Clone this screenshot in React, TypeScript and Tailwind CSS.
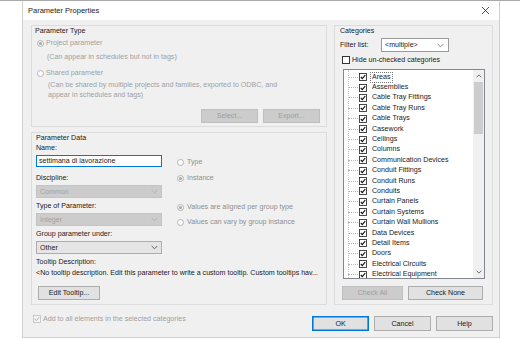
import React from "react";

const cats = [
  "Areas",
  "Assemblies",
  "Cable Tray Fittings",
  "Cable Tray Runs",
  "Cable Trays",
  "Casework",
  "Ceilings",
  "Columns",
  "Communication Devices",
  "Conduit Fittings",
  "Conduit Runs",
  "Conduits",
  "Curtain Panels",
  "Curtain Systems",
  "Curtain Wall Mullions",
  "Data Devices",
  "Detail Items",
  "Doors",
  "Electrical Circuits",
  "Electrical Equipment",
];

function Chevron({ color = "#444" }: { color?: string }) {
  return (
    <svg width="7" height="5" viewBox="0 0 7 5">
      <path d="M0.7 1 L3.5 3.8 L6.3 1" fill="none" stroke={color} strokeWidth="0.9" />
    </svg>
  );
}

function Radio({ checked, white }: { checked?: boolean; white?: boolean }) {
  return (
    <span
      className={
        "w-[7px] h-[7px] rounded-full border border-[#b5b5b5] flex items-center justify-center shrink-0 " +
        (white ? "bg-white" : "bg-[#f4f4f4]")
      }
    >
      {checked && <span className="w-[3px] h-[3px] rounded-full bg-[#a8a8a8]" />}
    </span>
  );
}

function TreeCheck() {
  return (
    <svg width="8" height="8" viewBox="0 0 8 8" className="shrink-0">
      <rect x="0.5" y="0.5" width="7" height="7" fill="#fff" stroke="#333" strokeWidth="0.9" />
      <path d="M1.8 4 L3.3 5.6 L6.2 2.2" fill="none" stroke="#111" strokeWidth="1.1" />
    </svg>
  );
}

function Btn({
  children,
  w,
  disabled,
  primary,
}: {
  children: React.ReactNode;
  w: string;
  disabled?: boolean;
  primary?: boolean;
}) {
  const base = "h-[14px] flex items-center justify-center shrink-0 border ";
  const look = disabled
    ? "bg-[#cccccc] border-[#bfbfbf] text-[#9d9d9d]"
    : primary
    ? "bg-[#e1e1e1] border-[#0078d7] shadow-[inset_0_0_0_0.6px_#0078d7] text-[#1a1a1a]"
    : "bg-[#e1e1e1] border-[#adadad] text-[#1a1a1a]";
  return <div className={base + look + " " + w}>{children}</div>;
}

export default function App() {
  return (
    <div
      className="w-[520px] h-[339px] bg-white border-t border-[#a9a9a9] overflow-hidden text-[7.1px] leading-[10px] text-[#1a1a1a]"
      style={{ fontFamily: '"Liberation Sans", Arial, sans-serif' }}
    >
      <div className="ml-[22px] w-[478px] h-[337px] border-l border-r border-b border-[#cfcfcf] flex flex-col">
        {/* title bar */}
        <div className="h-[19px] bg-white flex items-center justify-between pl-[5px] pr-[8px] shrink-0">
          <span className="text-[7.5px]">Parameter Properties</span>
          <svg width="9" height="9" viewBox="0 0 9 9" className="mr-[1px]">
            <path d="M1 1 L8 8 M8 1 L1 8" stroke="#222" strokeWidth="0.8" />
          </svg>
        </div>

        {/* body */}
        <div className="flex-1 bg-[#f0f0f0] pl-[8px] pr-[6px] pt-[5px] flex flex-col">
          <div className="flex gap-[7px]">
            {/* left column */}
            <div className="w-[296px] flex flex-col gap-[5px]">
              {/* Parameter Type */}
              <div className="h-[102px] border border-[#dcdcdc] flex flex-col pl-[3px] pr-[6px]">
                <div className="h-[10px] mt-0">Parameter Type</div>
                <div className="h-[10px] mt-[2px] flex items-center gap-[2px] pl-[2px] text-[#a0a0a0]">
                  <Radio checked />
                  <span>Project parameter</span>
                </div>
                <div className="h-[10px] mt-[4px] pl-[12px] text-[#a0a0a0]">
                  (Can appear in schedules but not in tags)
                </div>
                <div className="h-[10px] mt-[6px] flex items-center gap-[2px] pl-[2px] text-[#a0a0a0]">
                  <Radio white />
                  <span>Shared parameter</span>
                </div>
                <div className="mt-[2px] pl-[13px] text-[#a0a0a0]">
                  <div className="h-[10px]">
                    (Can be shared by multiple projects and families, exported to ODBC, and
                  </div>
                  <div className="h-[10px]">appear in schedules and tags)</div>
                </div>
                <div className="mt-[9px] flex justify-end gap-[5px]">
                  <Btn w="w-[57px]" disabled>
                    Select...
                  </Btn>
                  <Btn w="w-[57px]" disabled>
                    Export...
                  </Btn>
                </div>
              </div>

              {/* Parameter Data */}
              <div className="h-[173px] border border-[#dcdcdc] flex flex-col pl-[4px]">
                <div className="flex">
                  <div className="w-[126px] flex flex-col">
                    <div className="h-[10px]">Parameter Data</div>
                    <div className="h-[10px]">Name:</div>
                    <div className="h-[12px] mt-[2px] bg-white border border-[#0078d7] flex items-center pl-[2px]">
                      settimana di lavorazione
                    </div>
                    <div className="h-[10px] mt-[6px]">Discipline:</div>
                    <div className="h-[13px] mt-[2px] bg-[#cccccc] border border-[#c4c4c4] flex items-center justify-between pl-[3px] pr-[3px] text-[#a3a3a3]">
                      <span>Common</span>
                      <Chevron color="#b0b0b0" />
                    </div>
                    <div className="h-[10px] mt-[3px]">Type of Parameter:</div>
                    <div className="h-[13px] mt-[2px] bg-[#cccccc] border border-[#c4c4c4] flex items-center justify-between pl-[3px] pr-[3px] text-[#a3a3a3]">
                      <span>Integer</span>
                      <Chevron color="#b0b0b0" />
                    </div>
                    <div className="h-[10px] mt-[3px]">Group parameter under:</div>
                    <div className="h-[13px] mt-[2px] bg-[#e5e5e5] border border-[#acacac] flex items-center justify-between pl-[3px] pr-[3px]">
                      <span>Other</span>
                      <Chevron color="#555" />
                    </div>
                  </div>
                  <div className="ml-[15px] flex flex-col text-[#8f8f8f]">
                    <div className="h-[10px] mt-[24px] flex items-center gap-[3px]">
                      <Radio white />
                      <span>Type</span>
                    </div>
                    <div className="h-[10px] mt-[6px] flex items-center gap-[3px]">
                      <Radio checked />
                      <span>Instance</span>
                    </div>
                    <div className="h-[10px] mt-[19px] flex items-center gap-[3px]">
                      <Radio checked />
                      <span>Values are aligned per group type</span>
                    </div>
                    <div className="h-[10px] mt-[5px] flex items-center gap-[3px]">
                      <Radio white />
                      <span>Values can vary by group instance</span>
                    </div>
                  </div>
                </div>
                <div className="h-[10px] mt-[3px]">Tooltip Description:</div>
                <div className="h-[10px] mt-[1px] whitespace-nowrap">
                  &lt;No tooltip description. Edit this parameter to write a custom tooltip. Custom tooltips hav...
                </div>
                <div className="mt-[8px] ml-[2px]">
                  <Btn w="w-[62px]">Edit Tooltip...</Btn>
                </div>
              </div>
            </div>

            {/* right column */}
            <div className="w-[159px] h-[280px] border border-[#dcdcdc] flex flex-col">
              <div className="h-[10px] pl-[5px]">Categories</div>
              <div className="flex items-center mt-[2px] pl-[5px]">
                <span className="w-[41px]">Filter list:</span>
                <div className="w-[68px] h-[14px] bg-white border border-[#9a9a9a] flex items-center justify-between pl-[3px] pr-[4px]">
                  <span>&lt;multiple&gt;</span>
                  <Chevron color="#777" />
                </div>
              </div>
              <div className="h-[9px] mt-[3px] pl-[7px] flex items-center gap-[2px]">
                <span className="w-[8px] h-[8px] border border-[#333] bg-white shrink-0" />
                <span>Hide un-checked categories</span>
              </div>
              <div className="ml-[8px] mt-[5px] w-[142px] h-[210px] bg-white border border-[#828790] flex overflow-hidden">
                <div className="flex-1 pt-[2px] relative">
                  <div className="absolute left-[4px] top-[0px] bottom-0 border-l border-dotted border-[#c4c4c4]" />
                  {cats.map((c, i) => (
                    <div key={c} className="h-[10.4px] flex items-center">
                      <span className="w-[10px] ml-[4px] border-t border-dotted border-[#b4b4b4]" />
                      <span className="ml-[1px]">
                        <TreeCheck />
                      </span>
                      <span
                        className={
                          "ml-[4px] px-[1px] leading-[9px] whitespace-nowrap " +
                          (i === 0 ? "outline outline-1 outline-dotted outline-[#777]" : "")
                        }
                      >
                        {c}
                      </span>
                    </div>
                  ))}
                </div>
                <div className="w-[11px] bg-[#f0f0f0] flex flex-col items-center">
                  <div className="h-[12px] flex items-center justify-center">
                    <svg width="6" height="4" viewBox="0 0 6 4">
                      <path d="M0.6 3.3 L3 0.9 L5.4 3.3" fill="none" stroke="#606060" strokeWidth="0.9" />
                    </svg>
                  </div>
                  <div className="w-[9px] h-[52px] bg-[#cdcdcd]" />
                  <div className="flex-1" />
                  <div className="h-[12px] flex items-center justify-center">
                    <svg width="6" height="4" viewBox="0 0 6 4">
                      <path d="M0.6 0.7 L3 3.1 L5.4 0.7" fill="none" stroke="#606060" strokeWidth="0.9" />
                    </svg>
                  </div>
                </div>
              </div>
              <div className="mt-[7px] ml-[7px] flex gap-[5px]">
                <Btn w="w-[61px]" disabled>
                  Check All
                </Btn>
                <Btn w="w-[75px]">Check None</Btn>
              </div>
            </div>
          </div>

          {/* bottom row */}
          <div className="flex justify-between">
            <div className="mt-[9px] ml-[2px] h-[9px] flex items-center gap-[2px] text-[#a0a0a0]">
              <svg width="8" height="8" viewBox="0 0 8 8" className="shrink-0">
                <rect x="0.5" y="0.5" width="7" height="7" fill="#f4f4f4" stroke="#c0c0c0" strokeWidth="0.8" />
                <path d="M1.8 4 L3.3 5.6 L6.2 2.2" fill="none" stroke="#b0b0b0" strokeWidth="1" />
              </svg>
              <span>Add to all elements in the selected categories</span>
            </div>
            <div className="mt-[11px] flex gap-[5px]">
              <Btn w="w-[57px] h-[15px]" primary>
                OK
              </Btn>
              <Btn w="w-[57px] h-[15px]">Cancel</Btn>
              <Btn w="w-[57px] h-[15px]">Help</Btn>
            </div>
          </div>
        </div>
      </div>
    </div>
  );
}
